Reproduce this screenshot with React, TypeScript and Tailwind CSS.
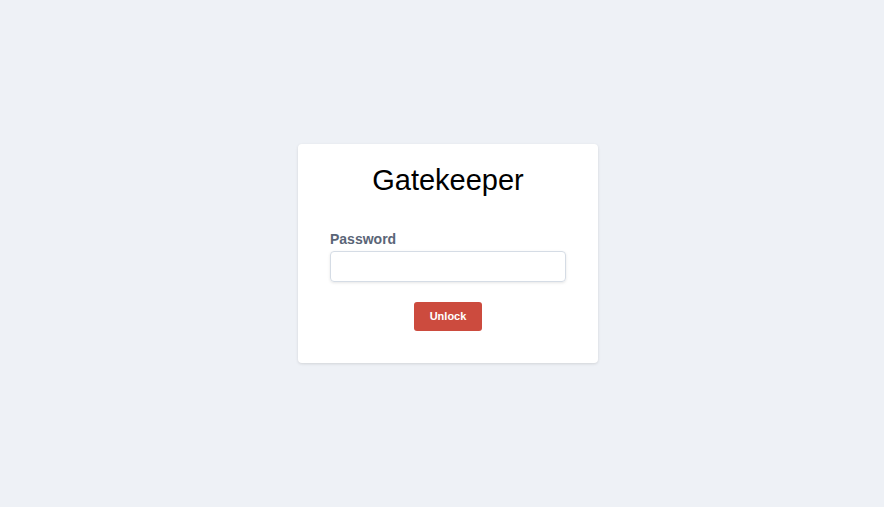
const App = () => {
  return (
    <div className="min-h-screen w-full bg-[#eef1f6] flex items-center justify-center pl-3 font-['Liberation_Sans',Arial,sans-serif]">
      <div className="w-[300px] bg-white rounded-[4px] shadow-[0_1px_3px_rgba(0,0,0,0.12)] px-8 pt-[18px] pb-8 flex flex-col">
        <h1 className="text-center text-[29px] leading-[36px] text-black">Gatekeeper</h1>
        <label className="mt-[31px] mb-[2px] block text-sm leading-5 font-bold text-[#5a6577]">Password</label>
        <input
          type="password"
          className="h-[31px] w-full rounded-[4px] border border-[#d5dce5] shadow-[0_1px_3px_rgba(0,0,0,0.1)] px-3 outline-none"
        />
        <div className="mt-5 flex justify-center">
          <button className="h-[29px] w-[68px] rounded-[3px] bg-[#cc4b3e] text-white text-[11px] font-bold">
            Unlock
          </button>
        </div>
      </div>
    </div>
  )
}

export default App
